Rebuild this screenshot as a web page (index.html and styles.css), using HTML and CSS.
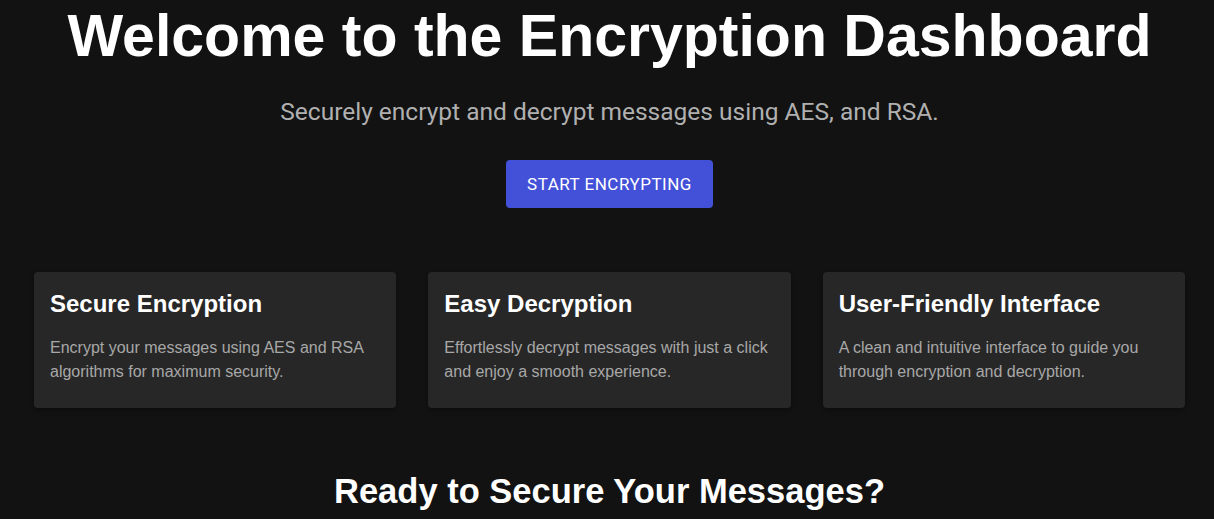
FILE: index.html
```html
<!DOCTYPE html>
<html lang="en">
<head>
<meta charset="utf-8">
<title>Encryption Dashboard</title>
<link rel="stylesheet" href="styles.css">
</head>
<body>
<main class="page">
  <section class="hero">
    <h1 class="hero-title">Welcome to the Encryption Dashboard</h1>
    <p class="hero-subtitle">Securely encrypt and decrypt messages using AES, and RSA.</p>
    <button class="hero-button" type="button">START ENCRYPTING</button>
  </section>
  <section class="features">
    <div class="card">
      <h3 class="card-title">Secure Encryption</h3>
      <p class="card-text">Encrypt your messages using AES and RSA algorithms for maximum security.</p>
    </div>
    <div class="card">
      <h3 class="card-title">Easy Decryption</h3>
      <p class="card-text">Effortlessly decrypt messages with just a click and enjoy a smooth experience.</p>
    </div>
    <div class="card">
      <h3 class="card-title">User-Friendly Interface</h3>
      <p class="card-text">A clean and intuitive interface to guide you through encryption and decryption.</p>
    </div>
  </section>
  <section class="cta">
    <h2 class="cta-title">Ready to Secure Your Messages?</h2>
  </section>
</main>
</body>
</html>
```
FILE: styles.css
```css
html, body {
  margin: 0;
  padding: 0;
  background: #121212;
  color: #ffffff;
  font-family: "Liberation Sans", Arial, sans-serif;
}

.page {
  padding: 2px 29px 40px 34px;
  display: flex;
  flex-direction: column;
}

.hero {
  display: flex;
  flex-direction: column;
  align-items: center;
  text-align: center;
}

.hero-title {
  margin: 0;
  font-size: 59px;
  font-weight: 700;
  line-height: normal;
  color: #ffffff;
}

.hero-subtitle {
  margin: 27px 0 0;
  font-family: Roboto, "Liberation Sans", sans-serif;
  font-size: 24.5px;
  line-height: normal;
  color: #b0b0b0;
}

.hero-button {
  margin-top: 34px;
  height: 48px;
  padding: 0 21px;
  border: none;
  border-radius: 4px;
  background: #4350d8;
  color: #ffffff;
  font-family: Roboto, "Liberation Sans", sans-serif;
  font-size: 17px;
  font-weight: 400;
  letter-spacing: 0.5px;
  cursor: pointer;
}

.features {
  margin-top: 64px;
  display: grid;
  grid-template-columns: repeat(3, 1fr);
  gap: 32px;
}

.card {
  background: #272727;
  border-radius: 4px;
  padding: 18px 16px 24px;
  box-shadow: 0 2px 4px rgba(0, 0, 0, 0.3);
}

.card-title {
  margin: 0 0 18px;
  font-size: 24px;
  font-weight: 700;
  line-height: normal;
  color: #ffffff;
}

.card-text {
  margin: 0;
  font-size: 16px;
  line-height: 24px;
  color: #a8a8a8;
}

.cta {
  margin-top: 64px;
  text-align: center;
}

.cta-title {
  margin: 0;
  font-size: 34.5px;
  font-weight: 700;
  line-height: normal;
}
```
